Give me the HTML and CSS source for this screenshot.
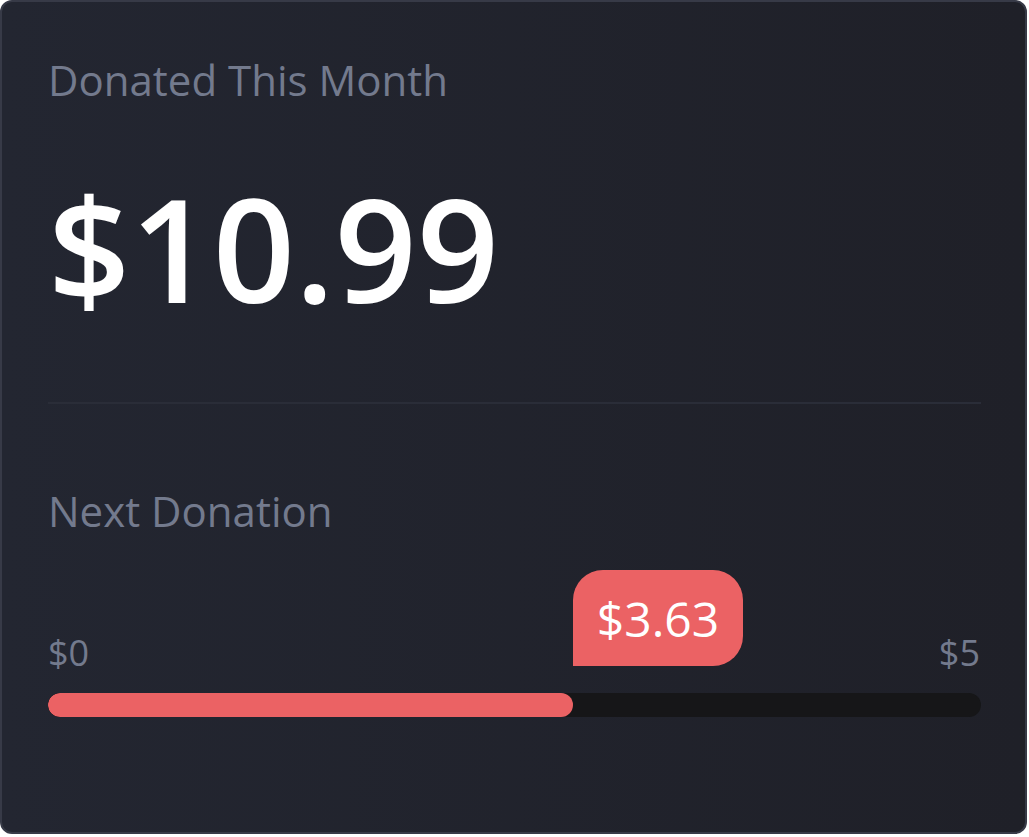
FILE: index.html
```html
<!DOCTYPE html>
<html>
<head>
<meta charset="utf-8">
<link rel="stylesheet" href="styles.css">
</head>
<body>
<div class="card">
  <div class="label first">Donated This Month</div>
  <div class="amount">$10.99</div>
  <hr class="divider">
  <div class="label second">Next Donation</div>
  <div class="progress">
    <div class="scale">
      <span class="min">$0</span>
      <span class="max">$5</span>
      <div class="badge" style="left: 56.27%">$3.63</div>
    </div>
    <div class="track"><div class="fill" style="width: 56.27%"></div></div>
  </div>
</div>
</body>
</html>
```
FILE: styles.css
```css
html, body {
  margin: 0;
  padding: 0;
  background: #ffffff;
}
.card {
  box-sizing: border-box;
  width: 1027px;
  height: 834px;
  border: 2px solid #373a47;
  border-radius: 12px;
  background: linear-gradient(to right, #232631, #1f2028);
  padding: 0 44px 0 46px;
  font-family: "Open Sans", "Noto Sans", sans-serif;
  display: flex;
  flex-direction: column;
}
.label {
  color: #737a8d;
  font-size: 42px;
  line-height: 1;
  font-weight: 400;
}
.first {
  margin-top: 57px;
}
.amount {
  color: #ffffff;
  font-size: 144px;
  line-height: 1;
  font-weight: 600;
  margin-top: 74px;
}
.divider {
  border: 0;
  height: 2px;
  background: #2a2d38;
  margin: 83px 0 0 0;
}
.second {
  margin-top: 86px;
}
.progress {
  margin-top: 71px;
}
.scale {
  position: relative;
  height: 70px;
  display: flex;
  justify-content: space-between;
  align-items: flex-end;
}
.min, .max {
  color: #737a8d;
  font-size: 36px;
  line-height: 1;
  padding-bottom: 2px;
}
.max {
  margin-right: 1px;
}
.badge {
  position: absolute;
  bottom: 7px;
  box-sizing: border-box;
  width: 170px;
  height: 96px;
  background: #eb6264;
  color: #ffffff;
  border-radius: 30px 30px 30px 0;
  font-size: 48px;
  font-weight: 500;
  display: flex;
  align-items: center;
  justify-content: center;
}
.track {
  margin-top: 20px;
  height: 24px;
  border-radius: 12px;
  background: #161618;
  overflow: hidden;
}
.fill {
  height: 100%;
  background: #eb6264;
  border-radius: 12px;
}
```
